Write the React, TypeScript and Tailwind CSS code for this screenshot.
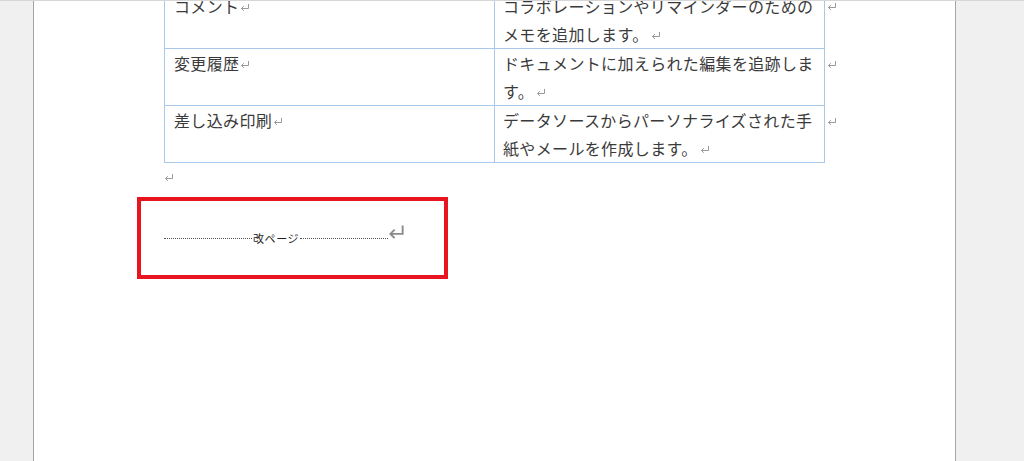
import React from "react";

const jp = { fontFamily: '"Noto Sans CJK JP", "Noto Sans", sans-serif' };

function Ret({ className = "" }: { className?: string }) {
  return (
    <svg viewBox="0 0 10 9" className={"inline-block w-[10px] h-[9px] align-[1px] " + className} fill="none" stroke="#9a9a9a" strokeWidth="1">
      <path d="M8.5 1v4.5H1.5M3.8 3.2 1.5 5.5l2.3 2.3" />
    </svg>
  );
}

const rows = [
  { name: "コメント", desc: ["コラボレーションやリマインダーのための", "メモを追加します。"] },
  { name: "変更履歴", desc: ["ドキュメントに加えられた編集を追跡しま", "す。"] },
  { name: "差し込み印刷", desc: ["データソースからパーソナライズされた手", "紙やメールを作成します。"] },
];

export default function App() {
  return (
    <div className="w-[1024px] h-[461px] overflow-hidden bg-[#f0f0f0] border-t border-[#d6d6d6] flex" style={jp}>
      <div className="ml-[33px] w-[923px] h-full bg-white border-x border-[#a5a5a5] relative">
        <div className="pl-[130px] -mt-[10px]">
          <div className="w-[676px]">
            {rows.map((r, i) => (
              <div key={i} className="flex">
                <div
                  className={
                    "flex w-[661px] border-x border-b border-[#a8c9ea] text-[16px] leading-[28px] tracking-[0.35px] text-[#3a3a3a] " +
                    (i === 0 ? "border-t" : "")
                  }
                >
                  <div className="w-[330px] border-r border-[#a8c9ea] pl-[9px]">
                    {r.name}
                    <Ret className="ml-[1px]" />
                  </div>
                  <div className="flex-1 pl-[8px]">
                    {r.desc.map((l, j) => (
                      <div key={j} className="whitespace-nowrap">
                        {l}
                        {j === r.desc.length - 1 && <Ret className="ml-[2px]" />}
                      </div>
                    ))}
                  </div>
                </div>
                <div className="pl-[2px] leading-[28px]">
                  <Ret />
                </div>
              </div>
            ))}
          </div>
          <div className="h-[28px] flex items-center">
            <Ret />
          </div>
          <div className="flex items-center h-[40px] mt-[27px]">
            <div className="w-[88px] border-b border-dotted border-[#555]" />
            <span className="text-[11px] text-[#222] tracking-[0.6px] px-[1px] leading-none">改ページ</span>
            <div className="w-[88px] border-b border-dotted border-[#555]" />
            <svg viewBox="0 0 18 16" className="w-[17px] h-[16px] -mt-[12px]" fill="none" stroke="#8a8a8a" strokeWidth="2">
              <path d="M15.5 1v9H2.5M7 5.5 2.5 10 7 14.5" />
            </svg>
          </div>
        </div>
        <div className="absolute left-[103px] top-[196px] w-[311px] h-[82px] border-[4px] border-[#e8141f]" />
      </div>
    </div>
  );
}
